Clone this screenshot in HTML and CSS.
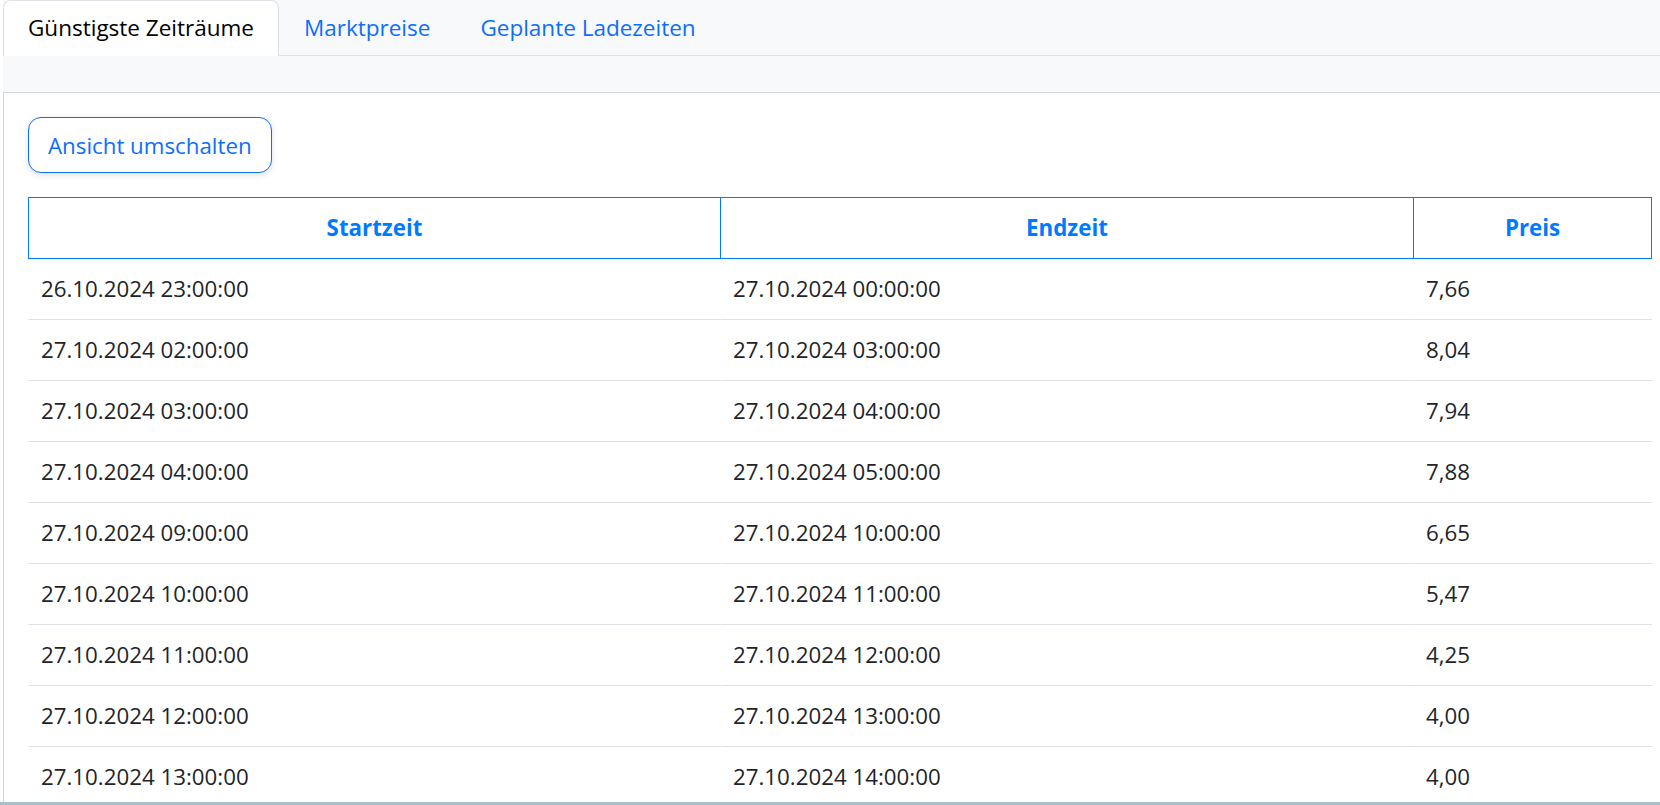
FILE: index.html
```html
<!DOCTYPE html>
<html lang="de">
<head>
<meta charset="utf-8">
<title>Ladeplanung</title>
<link rel="stylesheet" href="styles.css">
</head>
<body>
<div class="app">
  <ul class="tabs">
    <li><a class="tab active" href="#">Günstigste Zeiträume</a></li>
    <li><a class="tab" href="#">Marktpreise</a></li>
    <li><a class="tab" href="#">Geplante Ladezeiten</a></li>
  </ul>
  <div class="band">
    <div class="panel">
      <button class="toggle" type="button">Ansicht umschalten</button>
      <table class="prices">
        <thead>
          <tr>
            <th class="c1">Startzeit</th>
            <th class="c2">Endzeit</th>
            <th class="c3">Preis</th>
          </tr>
        </thead>
        <tbody>
          <tr><td>26.10.2024 23:00:00</td><td>27.10.2024 00:00:00</td><td>7,66</td></tr>
          <tr><td>27.10.2024 02:00:00</td><td>27.10.2024 03:00:00</td><td>8,04</td></tr>
          <tr><td>27.10.2024 03:00:00</td><td>27.10.2024 04:00:00</td><td>7,94</td></tr>
          <tr><td>27.10.2024 04:00:00</td><td>27.10.2024 05:00:00</td><td>7,88</td></tr>
          <tr><td>27.10.2024 09:00:00</td><td>27.10.2024 10:00:00</td><td>6,65</td></tr>
          <tr><td>27.10.2024 10:00:00</td><td>27.10.2024 11:00:00</td><td>5,47</td></tr>
          <tr><td>27.10.2024 11:00:00</td><td>27.10.2024 12:00:00</td><td>4,25</td></tr>
          <tr><td>27.10.2024 12:00:00</td><td>27.10.2024 13:00:00</td><td>4,00</td></tr>
          <tr><td>27.10.2024 13:00:00</td><td>27.10.2024 14:00:00</td><td>4,00</td></tr>
        </tbody>
      </table>
    </div>
  </div>
</div>
</body>
</html>
```

FILE: styles.css
```css
* {
  box-sizing: border-box;
}

html, body {
  margin: 0;
  height: 100%;
}

body {
  font-family: "Open Sans", "Noto Sans", sans-serif;
  font-size: 22.3px;
  color: #212529;
  background: #ffffff;
  overflow: hidden;
  border-bottom: 3px solid #a9c0c8;
}

.app {
  height: 100%;
  margin-left: 3px;
  display: flex;
  flex-direction: column;
}

.tabs {
  list-style: none;
  margin: 0;
  padding: 0;
  display: flex;
  background: #f8f9fa;
  border-bottom: 1px solid #dee2e6;
}

.tab {
  display: block;
  height: 56px;
  margin-bottom: -1px;
  padding: 0 24px 2px;
  font-size: 22.5px;
  line-height: 53px;
  border: 1px solid transparent;
  border-bottom: none;
  border-radius: 8px 8px 0 0;
  color: #0d6efd;
  text-decoration: none;
  white-space: nowrap;
}

.tab.active {
  color: #000000;
  background: #ffffff;
  border-color: #dee2e6;
}

.band {
  flex: 1;
  min-height: 0;
  background: #f8f9fa;
  padding-top: 36px;
  display: flex;
  flex-direction: column;
}

.panel {
  flex: 1;
  min-height: 0;
  overflow: hidden;
  background: #ffffff;
  border-top: 1px solid #d4d6d8;
  border-left: 1px solid #d4d6d8;
  padding: 24px 8px 0 24px;
}

.toggle {
  display: block;
  height: 56px;
  padding: 2px 19px 0;
  margin: 0 0 24px;
  font: inherit;
  line-height: 52px;
  color: #0d6efd;
  background: #ffffff;
  border: 1px solid #0d6efd;
  border-radius: 13px;
  box-shadow: 0 2px 6px rgba(30, 60, 110, 0.16);
  cursor: pointer;
}

.prices {
  width: 1624px;
  table-layout: fixed;
  border-collapse: separate;
  border-spacing: 0;
}

.prices th,
.prices td {
  padding: 12px;
  line-height: 36px;
  border-left: 1px solid transparent;
  white-space: nowrap;
}

.prices th {
  height: 62px;
  color: #007bff;
  font-weight: 700;
  text-align: center;
  border-top: 1px solid #007bff;
  border-bottom: 1px solid #007bff;
  border-left-color: #007bff;
}

.prices th.c1 { width: 692px; }
.prices th.c2 { width: 693px; }
.prices th.c3 {
  width: 239px;
  border-right: 1px solid #007bff;
}

.prices td {
  height: 61px;
  text-align: left;
  font-weight: 400;
  border-bottom: 1px solid #dee2e6;
}
```
